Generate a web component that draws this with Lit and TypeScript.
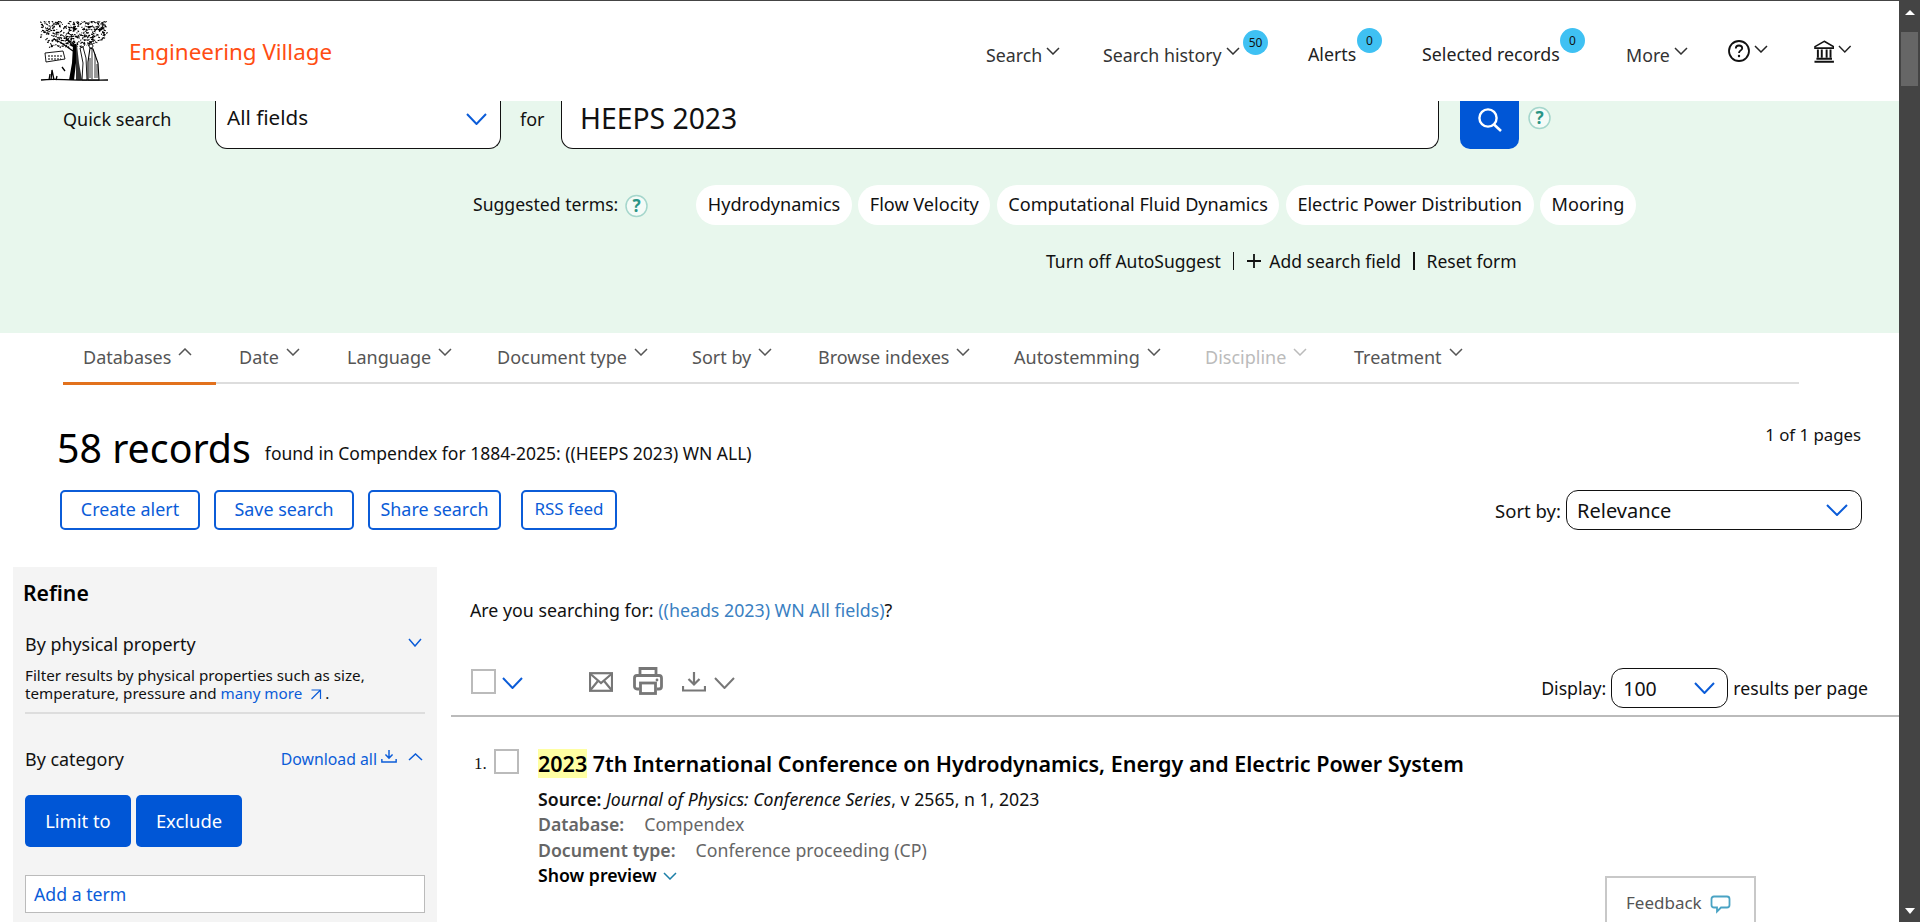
import { LitElement, html, svg, css } from 'lit';
import { customElement } from 'lit/decorators.js';

const BLUE = '#0b5cd8';

const chev = (w: number, h: number, color: string, sw = 1.5, up = false) => html`
  <svg class="chev" width=${w} height=${h} viewBox="0 0 ${w} ${h}" fill="none">
    <path
      d=${up
        ? `M1 ${h - 1}L${w / 2} 1L${w - 1} ${h - 1}`
        : `M1 1L${w / 2} ${h - 1}L${w - 1} 1`}
      stroke=${color}
      stroke-width=${sw}
    />
  </svg>
`;

// the tree of the publisher logo, roughly: seeded scribble strokes for the canopy
const treeStrokes = () => {
  let seed = 17;
  const rnd = () => {
    seed = (seed * 16807) % 2147483647;
    return seed / 2147483647;
  };
  const out: string[] = [];
  for (let i = 0; i < 520; i++) {
    const x = 5 + rnd() * 66;
    const y = 3 + rnd() * 26;
    // canopy is a wide band that tapers to the lower left and right
    if (y > 20 && (x < 8 + (y - 20) * 0.6 || x > 70 - (y - 20) * 2)) continue;
    const dx = (rnd() - 0.5) * 4.5;
    const dy = (rnd() - 0.5) * 2.5;
    out.push(`M${x.toFixed(1)} ${y.toFixed(1)}l${dx.toFixed(1)} ${dy.toFixed(1)}`);
  }
  return out.join('');
};

const logo = html`
  <svg class="logo" width="69" height="60" viewBox="4 3 69 60" fill="none">
    ${svg`
      <path d=${treeStrokes()} stroke="#000" stroke-width="1.1" />
      <path d="M37 27L36 45L33 62H38L40 45L41 27Z" fill="#000" />
      <path d="M41 27L43 45L46 62H40L40 27Z" fill="#333" />
      <path d="M24 24L37 33M30 20L37 28" stroke="#000" stroke-width="1.3" />
      <path d="M9 35L27 33L29 41L10 44Z" fill="#fff" stroke="#000" stroke-width="0.9" />
      <path d="M12 38h14M12 41h13" stroke="#000" stroke-width="1" stroke-dasharray="2 1" />
      <path d="M44 30L47 29L50 40L51 62H46L47 45Z" fill="#fff" stroke="#000" stroke-width="0.9" />
      <path d="M54 30L57 31L62 45L63 62H52L52 44Z" fill="#fff" stroke="#000" stroke-width="1.1" />
      <path d="M56 31V61M59 36V60M61 46V60M54 40V60" stroke="#000" stroke-width="0.8" />
      <circle cx="55" cy="28" r="2" fill="#fff" stroke="#000" stroke-width="0.9" />
      <path d="M5 62C20 60 30 63 72 62" stroke="#000" stroke-width="1.3" />
      <path d="M15 62L16 52L18 62M13 62L14 56M20 62L21 58M26 49L29 53" stroke="#000" stroke-width="1.3" />
    `}
  </svg>
`;

const helpIcon = html`
  <svg width="22" height="22" viewBox="0 0 22 22" fill="none">
    <circle cx="11" cy="11" r="10" stroke="#111" stroke-width="1.8" />
    <path
      d="M7.8 8.4C7.8 6.6 9.2 5.5 11 5.5C12.8 5.5 14.2 6.6 14.2 8.2C14.2 10.4 11 10.4 11 13"
      stroke="#111"
      stroke-width="1.8"
    />
    <circle cx="11" cy="16" r="1.2" fill="#111" />
  </svg>
`;

const museumIcon = html`
  <svg width="21" height="23" viewBox="0 0 21 23" fill="none">
    <path d="M10.5 1L20 6.5V8H1V6.5Z" fill="#fff" stroke="#111" stroke-width="1.6" />
    <path d="M4 9.5V18M8 9.5V18M13 9.5V18M17 9.5V18" stroke="#111" stroke-width="2" />
    <path d="M2.5 19H18.5M0.5 22H20.5" stroke="#111" stroke-width="2" />
  </svg>
`;

const hintIcon = html`
  <svg width="23" height="24" viewBox="0 0 23 24" fill="none">
    <circle cx="11.5" cy="12" r="10.5" fill="#f4fbf7" stroke="#a5d6cc" stroke-width="1.5" />
    <text
      x="11.5"
      y="18"
      text-anchor="middle"
      font-family="Noto Sans, sans-serif"
      font-size="17"
      font-weight="700"
      fill="#2a9485"
      >?</text
    >
  </svg>
`;

const searchIcon = html`
  <svg width="24" height="24" viewBox="0 0 24 24" fill="none">
    <circle cx="10" cy="10" r="8.6" stroke="#fff" stroke-width="2.4" />
    <path d="M16 16.5L23 23" stroke="#fff" stroke-width="2.6" />
  </svg>
`;

const mailIcon = html`
  <svg width="24" height="20" viewBox="0 0 24 20" fill="none">
    <rect x="1" y="1.2" width="22" height="17.6" stroke="#777" stroke-width="2.2" />
    <path d="M1.5 2L12 11L22.5 2M1.5 18L8.5 9.5M22.5 18L15.5 9.5" stroke="#777" stroke-width="2.2" />
  </svg>
`;

const printIcon = html`
  <svg width="30" height="28" viewBox="0 0 30 28" fill="none">
    <path d="M7 8V1.5H23V8" stroke="#777" stroke-width="2.8" />
    <path
      d="M6 22H4C2.5 22 1.5 21 1.5 19.5V11C1.5 9.5 2.5 8.5 4 8.5H26C27.5 8.5 28.5 9.5 28.5 11V19.5C28.5 21 27.5 22 26 22H24"
      stroke="#777"
      stroke-width="2.8"
    />
    <rect x="7.5" y="16" width="15" height="10.5" stroke="#777" stroke-width="2.8" />
    <circle cx="24" cy="13" r="1.4" fill="#777" />
  </svg>
`;

const downloadIcon = (w: number, h: number, color: string, sw: number) => html`
  <svg width=${w} height=${h} viewBox="0 0 24 20" fill="none">
    <path d="M12 0V12M6.5 7L12 12.5L17.5 7" stroke=${color} stroke-width=${sw} />
    <path d="M1 14V18.5H23V14" stroke=${color} stroke-width=${sw} />
  </svg>
`;

const NAV_ITEMS = [
  { label: 'Search', cls: 'low' },
  { label: 'Search history', cls: 'low', badge: '50', badgeCls: 'b-hist' },
  { label: 'Alerts', cls: 'high', badge: '0', badgeCls: 'b-alert', noChev: true },
  { label: 'Selected records', cls: 'high', badge: '0', badgeCls: 'b-sel', noChev: true },
  { label: 'More', cls: 'low' },
];

const TERMS = [
  'Hydrodynamics',
  'Flow Velocity',
  'Computational Fluid Dynamics',
  'Electric Power Distribution',
  'Mooring',
];

const TABS = [
  { label: 'Databases', active: true },
  { label: 'Date' },
  { label: 'Language' },
  { label: 'Document type' },
  { label: 'Sort by' },
  { label: 'Browse indexes' },
  { label: 'Autostemming' },
  { label: 'Discipline', off: true },
  { label: 'Treatment' },
];

@customElement('app-root')
class AppRoot extends LitElement {
  static styles = css`
    :host {
      display: flex;
      position: relative;
      width: 1920px;
      height: 922px;
      overflow: hidden;
      background: #fff;
      color: #111;
      font-family: 'Noto Sans', 'Liberation Sans', sans-serif;
      font-size: 16px;
    }

    .page {
      width: 1899px;
      flex: none;
      display: flex;
      flex-direction: column;
    }

    .scrollbar {
      width: 21px;
      flex: none;
      display: flex;
      flex-direction: column;
      align-items: center;
      background: #444;
      box-sizing: border-box;
      padding-top: 10px;
    }
    .scrollbar .thumb {
      width: 17px;
      height: 54px;
      margin-top: 17px;
      background: #666;
    }
    .scrollbar .up {
      border: 5px solid transparent;
      border-top: 0;
      border-bottom: 5px solid #fff;
    }
    .scrollbar .down {
      margin-top: auto;
      margin-bottom: 8px;
      border: 5px solid transparent;
      border-bottom: 0;
      border-top: 6px solid #fff;
    }

    header {
      height: 100px;
      flex: none;
      border-top: 1px solid #444;
      display: grid;
      grid-template-columns: 986px 1fr;
    }
    .brand {
      display: flex;
      align-items: flex-start;
      padding: 20px 0 0 40px;
    }
    .brand .name {
      margin: 17px 0 0 20px;
      font-size: 22.4px;
      line-height: 28px;
      color: #ff4d12;
    }
    .nav {
      display: grid;
      grid-template-columns: 117px 205px 114px 204px 102px 86px 38px;
    }
    .nav-item {
      position: relative;
      display: flex;
      align-items: flex-start;
      gap: 4px;
      font-size: 17.8px;
      line-height: 24px;
      color: #333;
      white-space: nowrap;
    }
    .nav-item.low {
      padding-top: 42px;
    }
    .nav-item.high {
      padding-top: 41px;
      color: #222;
    }
    .nav-item .chev {
      margin-top: 4px;
    }
    .nav-item.icon {
      padding-top: 39px;
      gap: 4px;
    }
    .nav-item.icon .chev {
      margin-top: 5px;
    }
    .badge {
      position: absolute;
      width: 25px;
      height: 25px;
      border-radius: 50%;
      background: #3fc1f3;
      color: #111;
      font-size: 12px;
      line-height: 25px;
      text-align: center;
    }
    .b-hist {
      left: 140px;
      top: 29px;
    }
    .b-alert {
      left: 49px;
      top: 27px;
    }
    .b-sel {
      left: 138px;
      top: 27px;
    }

    .band {
      height: 232px;
      flex: none;
      background: #e8f7ed;
      display: flex;
      flex-direction: column;
    }
    .query {
      display: flex;
      align-items: flex-start;
      padding-left: 63px;
    }
    .query .lbl {
      width: 152px;
      padding-top: 6px;
      font-size: 18px;
      line-height: 24px;
    }
    .field {
      box-sizing: border-box;
      height: 48px;
      background: #fff;
      border: 1.5px solid #111;
      border-top: 0;
      border-radius: 0 0 12px 12px;
    }
    .field.sel {
      width: 286px;
      display: flex;
      justify-content: space-between;
      padding: 2px 13px 0 11px;
      font-size: 20.6px;
      line-height: 28px;
    }
    .field.sel .chev {
      margin-top: 10px;
    }
    .query .for {
      width: 60px;
      padding: 6px 0 0 19px;
      box-sizing: border-box;
      font-size: 18px;
      line-height: 24px;
    }
    .field.text {
      width: 878px;
      padding-left: 18px;
      font-size: 28.3px;
      line-height: 34px;
    }
    .go {
      width: 59px;
      height: 48px;
      margin-left: 21px;
      display: flex;
      justify-content: center;
      padding-top: 7px;
      box-sizing: border-box;
      background: #0056d6;
      border-radius: 0 0 10px 10px;
    }
    .query .hint {
      margin: 5px 0 0 9px;
    }

    .suggest {
      display: flex;
      align-items: center;
      height: 40px;
      margin-top: 36px;
      padding-left: 473px;
      font-size: 17.6px;
    }
    .suggest .lbl {
      margin-top: -3px;
    }
    .suggest .hint {
      margin: 1px 0 0 7px;
      height: 24px;
    }
    .chips {
      display: flex;
      gap: 6.5px;
      margin-left: 48px;
    }
    .chip {
      height: 40px;
      padding: 0 11.5px;
      border-radius: 20px;
      background: #fff;
      font-size: 18.1px;
      line-height: 39px;
      white-space: nowrap;
    }

    .links {
      display: flex;
      align-items: center;
      margin-top: 24px;
      padding-left: 1046px;
      height: 24px;
      font-size: 17.5px;
      white-space: nowrap;
    }
    .links .sep {
      width: 1.5px;
      height: 18px;
      margin: 0 12px;
      background: #111;
    }
    .links .plus {
      margin-right: 7px;
    }

    .tabs {
      margin: 1px 100px 0 63px;
      display: grid;
      grid-template-columns: 156px 108px 150px 195px 126px 196px 191px 149px 1fr;
      height: 48px;
      flex: none;
      border-bottom: 2px solid #ddd;
    }
    .tab {
      display: flex;
      align-items: flex-start;
      gap: 7px;
      padding: 11px 0 0 20px;
      font-size: 18px;
      line-height: 24px;
      color: #555;
      white-space: nowrap;
    }
    .tab .chev {
      margin-top: 3px;
    }
    .tab.active {
      width: 153px;
      box-sizing: border-box;
      height: 48px;
      box-shadow: 0 3px 0 #e2711d;
    }
    .tab.off {
      color: #bbb;
    }

    .summary {
      display: flex;
      justify-content: space-between;
      align-items: flex-start;
      padding: 40px 38px 0 57px;
      height: 66px;
      flex: none;
    }
    .summary .count {
      display: flex;
      align-items: flex-start;
      gap: 14px;
      white-space: nowrap;
    }
    .summary .big {
      font-size: 39.3px;
      line-height: 48px;
      color: #000;
    }
    .summary .found {
      margin-top: 17px;
      font-size: 17.5px;
      line-height: 24px;
    }
    .summary .pages {
      margin-top: -1px;
      font-size: 16.8px;
      line-height: 24px;
    }

    .actions {
      display: flex;
      justify-content: space-between;
      padding: 0 37px 0 60px;
      height: 40px;
      flex: none;
    }
    .btns {
      display: flex;
      gap: 14px;
    }
    .btn {
      box-sizing: border-box;
      height: 40px;
      border: 2px solid #0b5cd8;
      border-radius: 5px;
      color: #0b5cd8;
      font-size: 17.9px;
      line-height: 34px;
      text-align: center;
      white-space: nowrap;
    }
    .btn.wide {
      width: 140px;
    }
    .btn.share {
      width: 133px;
    }
    .btn.rss {
      width: 96px;
      margin-left: 6px;
      font-size: 17px;
    }
    .sort {
      display: flex;
      align-items: center;
      gap: 5px;
      font-size: 18.5px;
    }
    .picker {
      box-sizing: border-box;
      height: 40px;
      display: flex;
      justify-content: space-between;
      align-items: center;
      border: 1.5px solid #111;
      border-radius: 12px;
      background: #fff;
      font-size: 20px;
    }
    .picker.rel {
      width: 296px;
      padding: 0 13px 0 10px;
    }
    .picker.num {
      width: 117px;
      padding: 0 12px 0 11px;
      font-size: 19.5px;
    }

    .main {
      display: flex;
      align-items: flex-start;
      margin-top: 37px;
      padding-left: 13px;
      flex: 1;
      min-height: 0;
    }
    .panel {
      width: 424px;
      height: 400px;
      flex: none;
      box-sizing: border-box;
      padding: 14px 12px 0 12px;
      background: #f4f4f4;
    }
    .panel h2 {
      margin: 0 0 0 -2px;
      font-size: 21.2px;
      line-height: 24px;
      font-weight: 600;
      color: #000;
    }
    .panel .head {
      display: flex;
      justify-content: space-between;
      align-items: flex-start;
      font-size: 17.9px;
      line-height: 24px;
    }
    .panel .head .chev {
      margin: 6px 3px 0 0;
    }
    .panel .phys {
      margin-top: 27px;
    }
    .panel .note {
      margin-top: 10px;
      padding-bottom: 10px;
      border-bottom: 2px solid #ddd;
      font-size: 15.2px;
      line-height: 18px;
    }
    .panel a {
      color: #0b5cd8;
    }
    .panel .ext {
      margin: 0 3px 0 4px;
      vertical-align: -1px;
    }
    .panel .cat {
      margin-top: 33px;
    }
    .panel .dl {
      display: flex;
      align-items: flex-start;
      margin-left: auto;
      color: #0b5cd8;
      font-size: 15.8px;
    }
    .panel .dl svg:first-of-type {
      margin: 3px 11px 0 4px;
    }
    .panel .dl .chev {
      margin-right: 2px;
    }
    .panel .limit {
      display: flex;
      gap: 5px;
      margin-top: 24px;
    }
    .panel .solid {
      width: 106px;
      height: 52px;
      border-radius: 5px;
      background: #0056d6;
      color: #fff;
      font-size: 18.4px;
      line-height: 52px;
      text-align: center;
    }
    .panel .term {
      box-sizing: border-box;
      height: 38px;
      margin-top: 28px;
      padding-left: 8px;
      background: #fff;
      border: 1px solid #bbb;
      color: #0b5cd8;
      font-size: 17.7px;
      line-height: 36px;
    }

    .results {
      flex: 1;
      margin-left: 14px;
    }
    .didyou {
      padding: 31px 0 0 19px;
      font-size: 17.8px;
      line-height: 24px;
    }
    .didyou a {
      color: #3a7fc2;
    }
    .toolbar {
      display: flex;
      align-items: flex-start;
      height: 47px;
      margin-top: 46px;
      padding: 0 31px 0 20px;
      border-bottom: 2px solid #bbb;
    }
    .toolbar > span {
      display: flex;
    }
    .box {
      box-sizing: border-box;
      flex: none;
      width: 25px;
      height: 25px;
      background: #fff;
      border: 2px solid #bbb;
    }
    .toolbar .box {
      margin-top: 1px;
    }
    .toolbar .all {
      margin: 9px 0 0 6px;
    }
    .toolbar .mail {
      margin: 4px 0 0 66px;
    }
    .toolbar .print {
      margin: -1px 0 0 20px;
    }
    .toolbar .save {
      margin: 4px 0 0 19px;
    }
    .toolbar .more {
      margin: 9px 0 0 8px;
    }
    .display {
      margin-left: auto;
      display: flex;
      align-items: center;
      gap: 5px;
      font-size: 17.7px;
      white-space: nowrap;
    }

    .record {
      display: flex;
      align-items: flex-start;
      margin-top: 31px;
      padding-left: 23px;
    }
    .record .num {
      width: 20px;
      padding-top: 6px;
      font-family: 'Liberation Serif', serif;
      font-size: 17px;
      line-height: 20px;
    }
    .record .box {
      margin-top: 1px;
    }
    .record .body {
      margin-left: 19px;
    }
    .record h3 {
      margin: 0;
      font-size: 21.5px;
      line-height: 32px;
      font-weight: 600;
      color: #000;
      white-space: nowrap;
    }
    mark {
      background: #ffffa3;
      color: inherit;
    }
    .meta {
      font-size: 17.7px;
      line-height: 25.3px;
      white-space: nowrap;
      color: #666;
    }
    .meta b {
      font-weight: 600;
    }
    .meta.src {
      margin-top: 7px;
      color: #111;
    }
    .meta.src i {
      font-style: italic;
    }
    .meta .gap {
      margin-left: 20px;
    }
    .meta.show {
      display: flex;
      align-items: center;
      gap: 6px;
      color: #000;
    }

    .feedback {
      position: absolute;
      left: 1605px;
      top: 876px;
      width: 151px;
      height: 70px;
      box-sizing: border-box;
      border: 2px solid #c8c8c8;
      background: #fff;
      display: flex;
      align-items: flex-start;
      gap: 8px;
      padding: 13px 0 0 19px;
      color: #555;
      font-size: 17px;
      line-height: 24px;
    }
    .feedback svg {
      margin-top: 4px;
    }
  `;

  render() {
    return html`
      <div class="page">
        <header>
          <div class="brand">
            ${logo}
            <span class="name">Engineering Village</span>
          </div>
          <nav class="nav">
            ${NAV_ITEMS.map(
              (n) => html`
                <div class="nav-item ${n.cls}">
                  ${n.label} ${n.noChev ? '' : chev(14, 8, '#333')}
                  ${n.badge ? html`<span class="badge ${n.badgeCls}">${n.badge}</span>` : ''}
                </div>
              `
            )}
            <div class="nav-item icon">${helpIcon} ${chev(14, 8, '#222')}</div>
            <div class="nav-item icon">${museumIcon} ${chev(14, 8, '#222')}</div>
          </nav>
        </header>

        <section class="band">
          <div class="query">
            <span class="lbl">Quick search</span>
            <div class="field sel">All fields ${chev(21, 12, BLUE, 2)}</div>
            <span class="for">for</span>
            <div class="field text">HEEPS 2023</div>
            <div class="go">${searchIcon}</div>
            <span class="hint">${hintIcon}</span>
          </div>
          <div class="suggest">
            <span class="lbl">Suggested terms:</span>
            <span class="hint">${hintIcon}</span>
            <div class="chips">${TERMS.map((t) => html`<span class="chip">${t}</span>`)}</div>
          </div>
          <div class="links">
            Turn off AutoSuggest
            <span class="sep"></span>
            <svg class="plus" width="16" height="16" viewBox="0 0 16 16">
              <path d="M8 1V15M1 8H15" stroke="#111" stroke-width="1.8" />
            </svg>
            Add search field
            <span class="sep"></span>
            Reset form
          </div>
        </section>

        <div class="tabs">
          ${TABS.map(
            (t) => html`
              <div class="tab ${t.active ? 'active' : ''} ${t.off ? 'off' : ''}">
                ${t.label} ${chev(14, 8, t.off ? '#bbb' : '#555', 1.5, !!t.active)}
              </div>
            `
          )}
        </div>

        <div class="summary">
          <div class="count">
            <span class="big">58 records</span>
            <span class="found">found in Compendex for 1884-2025: ((HEEPS 2023) WN ALL)</span>
          </div>
          <span class="pages">1 of 1 pages</span>
        </div>

        <div class="actions">
          <div class="btns">
            <span class="btn wide">Create alert</span>
            <span class="btn wide">Save search</span>
            <span class="btn share">Share search</span>
            <span class="btn rss">RSS feed</span>
          </div>
          <div class="sort">
            Sort by:
            <div class="picker rel">Relevance ${chev(22, 12, BLUE, 2)}</div>
          </div>
        </div>

        <div class="main">
          <aside class="panel">
            <h2>Refine</h2>
            <div class="head phys">By physical property ${chev(14, 9, BLUE)}</div>
            <div class="note">
              Filter results by physical properties such as size, temperature, pressure and
              <a>many more</a>
              <svg class="ext" width="12" height="12" viewBox="0 0 12 12" fill="none">
                <path d="M1.5 2H10.5V11M10.5 2L1.5 11" stroke="#0b5cd8" stroke-width="1.2" />
              </svg>.
            </div>
            <div class="head cat">
              By category
              <span class="dl">
                Download all ${downloadIcon(16, 13, BLUE, 2.2)}
                ${chev(15, 8, BLUE, 1.5, true)}
              </span>
            </div>
            <div class="limit">
              <span class="solid">Limit to</span>
              <span class="solid">Exclude</span>
            </div>
            <div class="term">Add a term</div>
          </aside>

          <div class="results">
            <div class="didyou">
              Are you searching for: <a>((heads 2023) WN All fields)</a>?
            </div>
            <div class="toolbar">
              <span class="box"></span>
              <span class="all">${chev(21, 12, BLUE, 2)}</span>
              <span class="mail">${mailIcon}</span>
              <span class="print">${printIcon}</span>
              <span class="save">${downloadIcon(24, 20, '#777', 2.2)}</span>
              <span class="more">${chev(21, 12, '#777', 2)}</span>
              <div class="display">
                Display:
                <div class="picker num">100 ${chev(21, 12, BLUE, 2)}</div>
                results per page
              </div>
            </div>
            <article class="record">
              <span class="num">1.</span>
              <span class="box"></span>
              <div class="body">
                <h3>
                  <mark>2023</mark> 7th International Conference on Hydrodynamics, Energy and
                  Electric Power System
                </h3>
                <div class="meta src">
                  <b>Source:</b> <i>Journal of Physics: Conference Series</i>, v 2565, n 1, 2023
                </div>
                <div class="meta"><b>Database:</b><span class="gap">Compendex</span></div>
                <div class="meta">
                  <b>Document type:</b><span class="gap">Conference proceeding (CP)</span>
                </div>
                <div class="meta show"><b>Show preview</b> ${chev(14, 8, '#1c7fa8')}</div>
              </div>
            </article>
          </div>
        </div>
      </div>

      <div class="scrollbar">
        <span class="up"></span>
        <span class="thumb"></span>
        <span class="down"></span>
      </div>

      <div class="feedback">
        Feedback
        <svg width="21" height="19" viewBox="0 0 21 19" fill="none">
          <path
            d="M4 1.5H17C18.6 1.5 19.5 2.4 19.5 4V10C19.5 11.6 18.6 12.5 17 12.5H11L7 16.5V12.5H4C2.4 12.5 1.5 11.6 1.5 10V4C1.5 2.4 2.4 1.5 4 1.5Z"
            stroke="#4aa3c4"
            stroke-width="1.8"
          />
        </svg>
      </div>
    `;
  }
}
